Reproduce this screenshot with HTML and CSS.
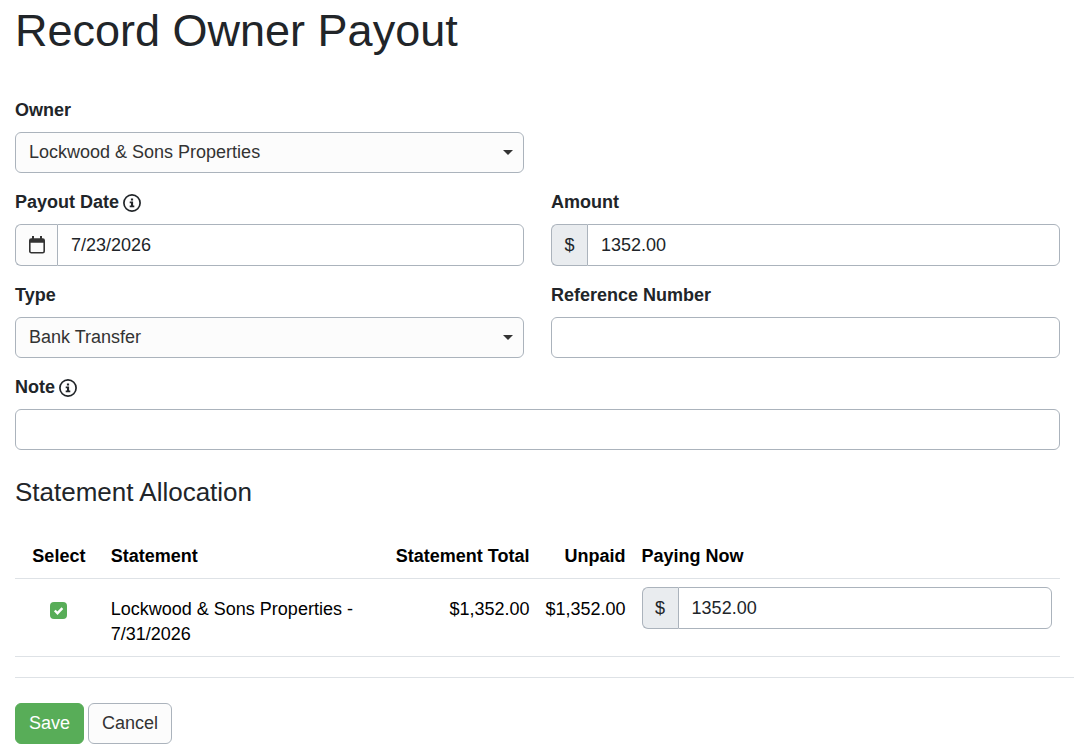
FILE: index.html
```html
<!DOCTYPE html>
<html lang="en">
<head>
<meta charset="utf-8">
<meta name="viewport" content="width=device-width, initial-scale=1">
<title>Record Owner Payout</title>
<link rel="stylesheet" href="styles.css">
</head>
<body>
<form class="page">
  <h1 class="page-title">Record Owner Payout</h1>

  <div class="fields">
    <div class="field field-start">
      <label class="label" for="owner">Owner</label>
      <div class="select-wrap">
        <select class="control select" id="owner"><option>Lockwood &amp; Sons Properties</option></select>
        <svg class="caret" viewBox="0 0 10 5" aria-hidden="true"><path d="M0 0h10L5 5z"/></svg>
      </div>
    </div>

    <div class="field field-start">
      <div class="label-row">
        <label class="label" for="date">Payout Date</label>
        <svg class="info" viewBox="0 0 18 18" aria-hidden="true"><circle cx="9" cy="9" r="8.1"/><path d="M7.900 4.500h2.200v2.100H7.900zM6.700 7.600h3.400v4h1.200v1.600H6.700v-1.600H8V9.200H6.700z"/></svg>
      </div>
      <div class="group">
        <button class="addon addon-button" type="button" aria-label="Open calendar">
          <svg class="calendar" viewBox="0 0 16 18" aria-hidden="true"><path class="calendar-frame" d="M.8 5v10.200a1.500 1.500 0 0 0 1.500 1.500h11.400a1.500 1.500 0 0 0 1.500-1.500V5"/><path d="M3 0h2v2.200h6V0h2v2.200h.8A2.200 2.200 0 0 1 16 4.400V6.800H0V4.400A2.200 2.200 0 0 1 2.200 2.200H3z"/></svg>
        </button>
        <input class="control" id="date" type="text" value="7/23/2026">
      </div>
    </div>

    <div class="field">
      <label class="label" for="amount">Amount</label>
      <div class="group">
        <span class="addon">$</span>
        <input class="control" id="amount" type="text" value="1352.00">
      </div>
    </div>

    <div class="field field-start">
      <label class="label" for="type">Type</label>
      <div class="select-wrap">
        <select class="control select" id="type"><option>Bank Transfer</option></select>
        <svg class="caret" viewBox="0 0 10 5" aria-hidden="true"><path d="M0 0h10L5 5z"/></svg>
      </div>
    </div>

    <div class="field">
      <label class="label" for="reference">Reference Number</label>
      <input class="control" id="reference" type="text">
    </div>

    <div class="field field-wide">
      <div class="label-row">
        <label class="label" for="note">Note</label>
        <svg class="info" viewBox="0 0 18 18" aria-hidden="true"><circle cx="9" cy="9" r="8.1"/><path d="M7.900 4.500h2.200v2.100H7.900zM6.700 7.600h3.400v4h1.200v1.600H6.700v-1.600H8V9.200H6.700z"/></svg>
      </div>
      <input class="control" id="note" type="text">
    </div>
  </div>

  <h2 class="section-title">Statement Allocation</h2>
  <table class="table">
    <colgroup><col class="col-select"><col class="col-statement"><col class="col-total"><col class="col-unpaid"><col></colgroup>
    <thead>
      <tr><th class="center">Select</th><th>Statement</th><th class="end">Statement Total</th><th class="end">Unpaid</th><th>Paying Now</th></tr>
    </thead>
    <tbody>
      <tr>
        <td class="center text-cell"><input class="check" type="checkbox" aria-label="Select statement" checked></td>
        <td class="text-cell">Lockwood &amp; Sons Properties - 7/31/2026</td>
        <td class="end text-cell">$1,352.00</td>
        <td class="end text-cell">$1,352.00</td>
        <td>
          <div class="group">
            <span class="addon">$</span>
            <input class="control" type="text" value="1352.00" aria-label="Paying now">
          </div>
        </td>
      </tr>
    </tbody>
  </table>

  <div class="actions">
    <button class="button button-primary" type="submit">Save</button>
    <button class="button" type="button">Cancel</button>
  </div>
</form>
</body>
</html>
```
FILE: styles.css
```css
* {
  box-sizing: border-box;
}

body {
  margin: 0;
  background: #fff;
  color: #212529;
  font: 18px/25px "Liberation Sans", Arial, sans-serif;
}

.page {
  padding: 4px 14px 11px 15px;
}

.page-title {
  margin: 0 0 40px;
  font-size: 45px;
  line-height: 54px;
  font-weight: 400;
}

.fields {
  display: grid;
  grid-template-columns: 1fr 1fr;
  gap: 17px 27px;
}

.field {
  display: flex;
  flex-direction: column;
  gap: 9px;
  min-width: 0;
}

.field-start {
  grid-column: 1;
}

.field-wide {
  grid-column: 1 / -1;
}

.label {
  font-weight: 700;
}

.label-row {
  display: flex;
  align-items: center;
  gap: 4px;
}

.info {
  width: 18px;
  height: 18px;
  fill: #212529;
}

.info circle {
  fill: none;
  stroke: #212529;
  stroke-width: 1.7;
}

.control {
  width: 100%;
  min-width: 0;
  height: 41px;
  margin: 0;
  padding: 0 13px;
  border: 1px solid #abb3bc;
  border-radius: 6px;
  background: #fff;
  color: #212529;
  font: inherit;
}

.select-wrap {
  position: relative;
}

.select {
  display: block;
  appearance: none;
  background: #fcfcfc;
  color: #333;
}

.caret {
  position: absolute;
  top: 18px;
  right: 11px;
  width: 10px;
  height: 5px;
  fill: #333;
  pointer-events: none;
}

.group {
  display: flex;
  height: 42px;
}

.group .control {
  flex: 1;
  height: 100%;
  border-radius: 0 6px 6px 0;
}

.addon {
  display: flex;
  justify-content: center;
  align-items: center;
  width: 36px;
  padding: 0;
  border: 1px solid #abb3bc;
  border-right: 0;
  border-radius: 6px 0 0 6px;
  background: #e9ecef;
  color: #212529;
  font: inherit;
}

.addon-button {
  width: 42px;
  background: #fcfcfc;
}

.calendar {
  width: 16px;
  height: 18px;
  fill: #333;
}

.calendar-frame {
  fill: none;
  stroke: #333;
  stroke-width: 1.6;
}

.section-title {
  margin: 26px 0 30px;
  font-size: 26px;
  line-height: 32px;
  font-weight: 400;
}

.table {
  width: 100%;
  table-layout: fixed;
  border-collapse: collapse;
  color: #000;
}

.table th,
.table td {
  padding: 8px;
  border-bottom: 1px solid #dee2e6;
  text-align: left;
  vertical-align: top;
}

.table th {
  padding-block: 6px 9px;
}

.table .text-cell {
  padding-block: 18px 9px;
}

.table .center {
  text-align: center;
}

.table .end {
  text-align: right;
}

.col-select {
  width: 8.4%;
}

.col-statement {
  width: 27%;
}

.col-total {
  width: 14.6%;
}

.col-unpaid {
  width: 9.2%;
}

.check {
  appearance: none;
  width: 17px;
  height: 17px;
  margin: 5px 0 0;
  border-radius: 4px;
  background: #58ad58;
  vertical-align: top;
}

.check:checked {
  background-image: url("data:image/svg+xml,%3Csvg xmlns='http://www.w3.org/2000/svg' viewBox='0 0 17 17'%3E%3Cpath d='M4.800 8.500l2.700 2.700 4.900-5' fill='none' stroke='white' stroke-width='2.400'/%3E%3C/svg%3E");
}

.actions {
  display: flex;
  gap: 4px;
  margin: 20px -14px 0 0;
  padding-top: 25px;
  border-top: 1px solid #dee2e6;
}

.button {
  height: 41px;
  padding: 0 13px;
  border: 1px solid #abb3bc;
  border-radius: 6px;
  background: #fcfcfc;
  color: #333;
  font: inherit;
}

.button-primary {
  border-color: #58ad58;
  background: #58ad58;
  color: #fff;
}
```
